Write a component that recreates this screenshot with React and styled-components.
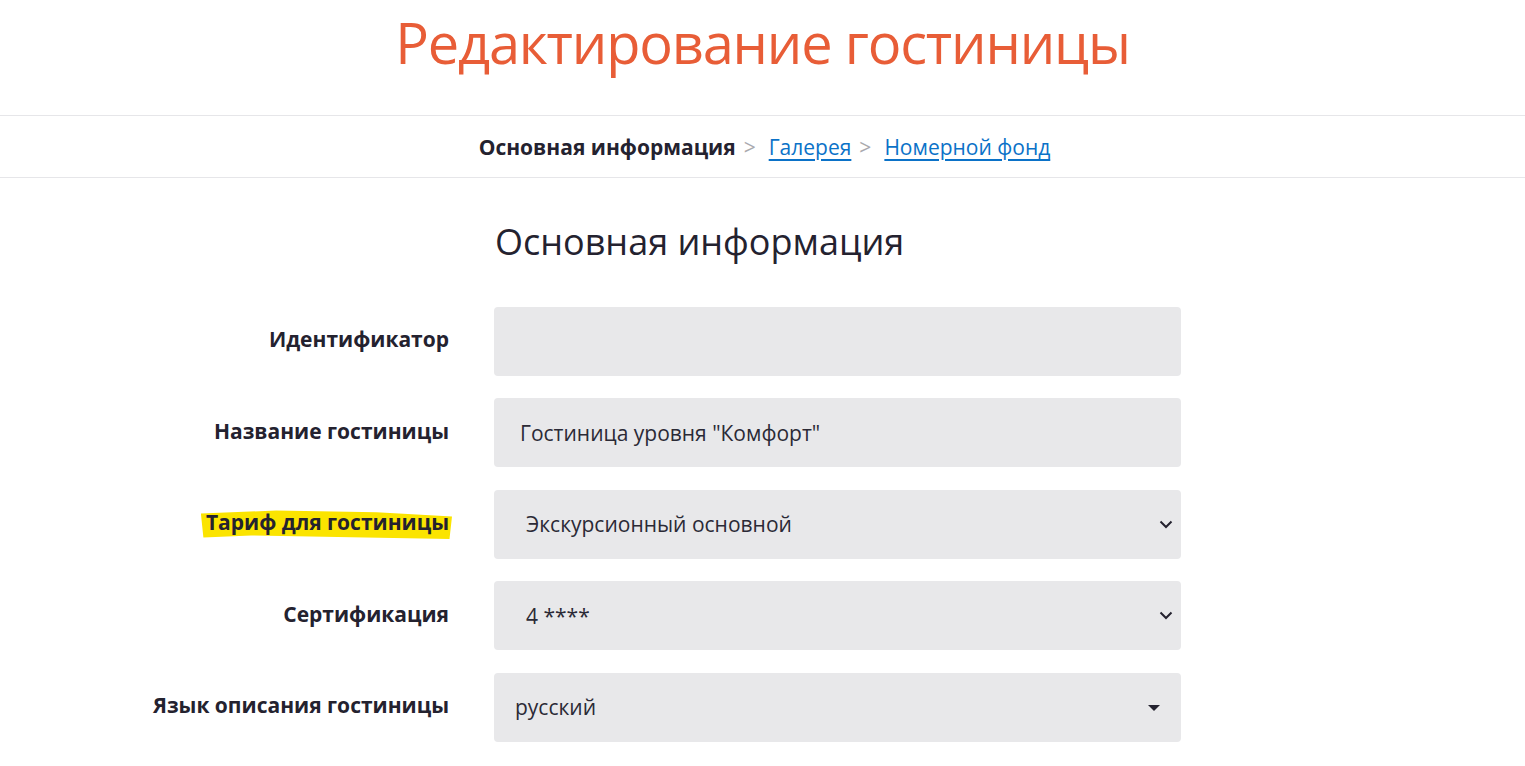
import React from 'react';
import styled, { createGlobalStyle } from 'styled-components';

const GlobalStyle = createGlobalStyle`
  html, body {
    margin: 0;
    padding: 0;
    background: #fff;
    overflow: hidden;
  }
  body {
    font-family: "Open Sans", "Liberation Sans", sans-serif;
    color: #24222f;
  }
`;

const Page = styled.div`
  width: 100%;
`;

const Title = styled.h1`
  margin: 0;
  height: 115px;
  display: flex;
  align-items: flex-start;
  justify-content: center;
  font-size: 56px;
  font-weight: 400;
  line-height: 84px;
  color: #e85d37;
  letter-spacing: -1.2px;
  box-sizing: border-box;
`;

const Steps = styled.nav`
  border-top: 1px solid #e6e6e9;
  border-bottom: 1px solid #e6e6e9;
  height: 63px;
  display: flex;
  align-items: center;
  justify-content: center;
  font-size: 21px;
  padding: 1px 0 0 4px;
  box-sizing: border-box;
`;

const Current = styled.span`
  font-weight: 700;
  color: #24222f;
`;

const Sep = styled.span`
  color: #a9a9ae;
  margin: 0 13px 0 8px;
`;

const StepLink = styled.a`
  color: #0b72c8;
  text-decoration: underline;
  text-underline-offset: 4px;
  cursor: pointer;
`;

const Form = styled.section`
  display: grid;
  grid-template-columns: 449px 687px;
  column-gap: 45px;
  row-gap: 22.5px;
  padding-top: 41px;
`;

const Heading = styled.h2`
  grid-column: 2;
  margin: 0 0 19px 1px;
  font-size: 36px;
  font-weight: 400;
  color: #24222f;
  line-height: 46px;
`;

const Label = styled.label`
  grid-column: 1;
  display: flex;
  align-items: center;
  justify-content: flex-end;
  font-size: 21px;
  font-weight: 700;
  color: #24222f;
  padding-bottom: 4px;
`;

const Marked = styled.span`
  position: relative;
  z-index: 0;
  &::before {
    content: '';
    position: absolute;
    z-index: -1;
    left: -5px;
    right: -3px;
    top: 2px;
    bottom: -3px;
    background: #fbe400;
    clip-path: polygon(0% 12%, 30% 2%, 70% 8%, 100% 22%, 99% 100%, 60% 94%, 20% 88%, 1% 95%);
  }
`;

const Field = styled.div`
  grid-column: 2;
  position: relative;
  height: 69px;
  background: #e8e8ea;
  border-radius: 4px;
  display: flex;
  align-items: center;
  box-sizing: border-box;
  padding-left: ${(p) => p.$indent}px;
  font-size: 21px;
  color: #2b2a36;
`;

const Chevron = () => (
  <svg
    width="14"
    height="9"
    viewBox="0 0 14 9"
    style={{ position: 'absolute', right: 8, top: 30 }}
  >
    <path d="M1.5 1.5 L7 7 L12.5 1.5" fill="none" stroke="#24222f" strokeWidth="2" />
  </svg>
);

const Caret = styled.span`
  position: absolute;
  right: 21px;
  top: 32px;
  width: 0;
  height: 0;
  border-left: 6px solid transparent;
  border-right: 6px solid transparent;
  border-top: 6px solid #24222f;
`;

const rows = [
  { label: 'Идентификатор', value: '', indent: 26 },
  { label: 'Название гостиницы', value: 'Гостиница уровня "Комфорт"', indent: 26 },
  { label: 'Тариф для гостиницы', value: 'Экскурсионный основной', indent: 32, select: 'chevron', marked: true },
  { label: 'Сертификация', value: '4 ****', indent: 32, select: 'chevron' },
  { label: 'Язык описания гостиницы', value: 'русский', indent: 21, select: 'caret' },
];

export default function App() {
  return (
    <Page>
      <GlobalStyle />
      <Title>Редактирование гостиницы</Title>
      <Steps>
        <Current>Основная информация</Current>
        <Sep>&gt;</Sep>
        <StepLink>Галерея</StepLink>
        <Sep>&gt;</Sep>
        <StepLink>Номерной фонд</StepLink>
      </Steps>
      <Form>
        <Heading>Основная информация</Heading>
        {rows.map((r) => (
          <React.Fragment key={r.label}>
            <Label>{r.marked ? <Marked>{r.label}</Marked> : r.label}</Label>
            <Field $indent={r.indent}>
              {r.value}
              {r.select === 'chevron' && <Chevron />}
              {r.select === 'caret' && <Caret />}
            </Field>
          </React.Fragment>
        ))}
      </Form>
    </Page>
  );
}
